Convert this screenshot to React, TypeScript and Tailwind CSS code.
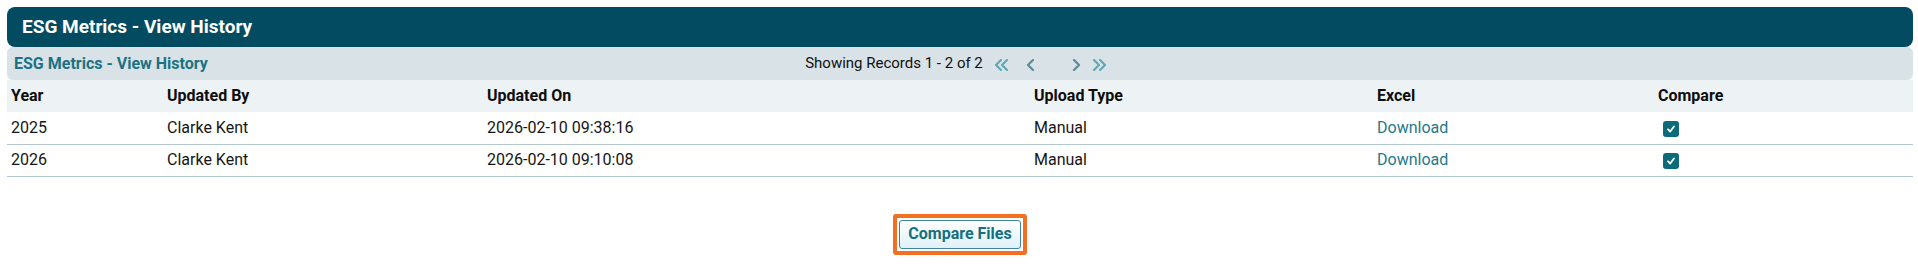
import React from "react";

type Row = {
  year: string;
  updatedBy: string;
  updatedOn: string;
  uploadType: string;
};

const rows: Row[] = [
  { year: "2025", updatedBy: "Clarke Kent", updatedOn: "2026-02-10 09:38:16", uploadType: "Manual" },
  { year: "2026", updatedBy: "Clarke Kent", updatedOn: "2026-02-10 09:10:08", uploadType: "Manual" },
];

const DoubleLeft = ({ color }: { color: string }) => (
  <svg width="15" height="12" viewBox="0 0 15 12" fill="none" stroke={color} strokeWidth="2" strokeLinecap="round" strokeLinejoin="round">
    <path d="M7 1 L2 6 L7 11" />
    <path d="M13 1 L8 6 L13 11" />
  </svg>
);

const DoubleRight = ({ color }: { color: string }) => (
  <svg width="15" height="12" viewBox="0 0 15 12" fill="none" stroke={color} strokeWidth="2" strokeLinecap="round" strokeLinejoin="round">
    <path d="M2 1 L7 6 L2 11" />
    <path d="M8 1 L13 6 L8 11" />
  </svg>
);

const SingleLeft = ({ color }: { color: string }) => (
  <svg width="9" height="12" viewBox="0 0 9 12" fill="none" stroke={color} strokeWidth="2.2" strokeLinecap="round" strokeLinejoin="round">
    <path d="M7 1 L2 6 L7 11" />
  </svg>
);

const SingleRight = ({ color }: { color: string }) => (
  <svg width="9" height="12" viewBox="0 0 9 12" fill="none" stroke={color} strokeWidth="2.2" strokeLinecap="round" strokeLinejoin="round">
    <path d="M2 1 L7 6 L2 11" />
  </svg>
);

const Checked = () => (
  <span className="ml-[5px] inline-flex h-4 w-4 items-center justify-center rounded-[3px] bg-[#0c6b78] align-middle">
    <svg width="10" height="10" viewBox="0 0 10 10" fill="none" stroke="#fff" strokeWidth="1.8" strokeLinecap="round" strokeLinejoin="round">
      <path d="M2 5.3 L4.2 7.5 L8 2.5" />
    </svg>
  </span>
);

export default function App() {
  return (
    <div className="min-h-[268px] w-full bg-white px-[7px] pt-[7px] pr-[5px] font-['Roboto',sans-serif]">
      {/* page title */}
      <div className="flex h-10 items-center rounded-lg bg-[#034b60] pl-[15px] text-[19px] font-bold text-white">
        ESG Metrics - View History
      </div>

      {/* grid caption + pager */}
      <div className="grid h-[33px] grid-cols-[1fr_auto_1fr] items-center rounded-md bg-[#d8e2e7] px-[7px]">
        <span className="text-[16px] font-bold text-[#1c7282]">ESG Metrics - View History</span>
        <div className="flex items-center pr-2 text-[15px] text-[#111]">
          <span>Showing Records 1 - 2 of 2</span>
          <span className="ml-[11px] mt-[3px] flex"><DoubleLeft color="#5ea6b2" /></span>
          <span className="ml-[17px] mt-[3px] flex"><SingleLeft color="#5b8d98" /></span>
          <span className="ml-[37px] mt-[3px] flex"><SingleRight color="#5b8d98" /></span>
          <span className="ml-[11px] mt-[3px] flex"><DoubleRight color="#5ea6b2" /></span>
        </div>
        <span />
      </div>

      <table className="w-full table-fixed border-collapse text-[16px]">
        <colgroup>
          <col className="w-[156px]" />
          <col className="w-[320px]" />
          <col className="w-[547px]" />
          <col className="w-[343px]" />
          <col className="w-[281px]" />
          <col />
        </colgroup>
        <thead>
          <tr className="h-8 bg-[#edf2f5] text-left font-bold text-[#0d0d0d]">
            <th className="pl-1">Year</th>
            <th className="pl-1">Updated By</th>
            <th className="pl-1">Updated On</th>
            <th className="pl-1">Upload Type</th>
            <th className="pl-1">Excel</th>
            <th className="pl-1">Compare</th>
          </tr>
        </thead>
        <tbody className="text-[#161616]">
          {rows.map((r) => (
            <tr key={r.year} className="h-8 border-b border-[#b3c7cf]">
              <td className="pl-1">{r.year}</td>
              <td className="pl-1">{r.updatedBy}</td>
              <td className="pl-1">{r.updatedOn}</td>
              <td className="pl-1">{r.uploadType}</td>
              <td className="pl-1">
                <a className="text-[#24798a]">Download</a>
              </td>
              <td className="pl-1">
                <Checked />
              </td>
            </tr>
          ))}
        </tbody>
      </table>

      <div className="mt-[37px] flex justify-center">
        <div className="rounded-[3px] border-4 border-[#f36f21] p-[2px]">
          <button className="block h-[29px] rounded-[3px] border border-[#3f8593] bg-gradient-to-b from-white to-[#dff1fa] px-2 text-[16px] font-bold text-[#14707e]">
            Compare Files
          </button>
        </div>
      </div>
    </div>
  );
}
